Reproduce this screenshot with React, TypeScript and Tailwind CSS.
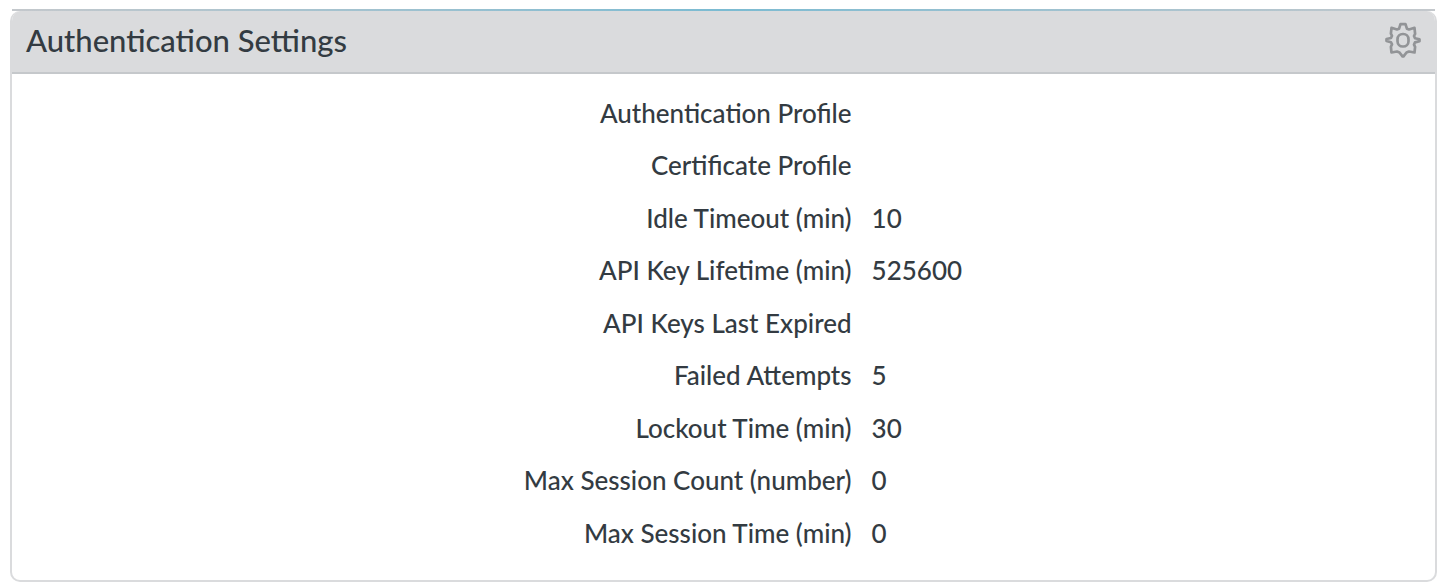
import React from "react";

const rows = [
  { label: "Authentication Profile", value: "" },
  { label: "Certificate Profile", value: "" },
  { label: "Idle Timeout (min)", value: "10" },
  { label: "API Key Lifetime (min)", value: "525600" },
  { label: "API Keys Last Expired", value: "" },
  { label: "Failed Attempts", value: "5" },
  { label: "Lockout Time (min)", value: "30" },
  { label: "Max Session Count (number)", value: "0" },
  { label: "Max Session Time (min)", value: "0" },
];

function GearIcon() {
  return (
    <svg viewBox="0 0 36 36" className="size-9" fill="none" strokeLinejoin="round" aria-hidden="true">
      <g stroke="#929497" strokeWidth="2.7">
        <path d="M15.5 2.200h5l1.500 4.600 2 .7 5.500-1.700.6 6-1.100 2.200 1 2.200 4.500 1v2l-4.500 1.200-1 2.200 1.100 2.200-.6 5.700-5.500-1-2.500 1-3 3.900h-1l-3-3.900-2.500-1-5.500 1-.6-5.700L7 22.400l-1-2.200L1.500 19v-2L6 16l1-2.200-1.100-2.200.6-5.800L12 7.500l2-.7z" />
        <rect x="12.500" y="12" width="11" height="12.500" rx="5.300" />
      </g>
    </svg>
  );
}

export default function App() {
  return (
    <main className="pt-[9px] pr-[5px] pb-[6px] pl-[10px] font-['Lato',sans-serif] font-medium text-[#333b42]">
      <div className="mx-[2px] h-[2px] bg-linear-to-r from-[#c4c8cc] via-[#7bbbd2] to-[#c4c8cc]" />
      <section className="overflow-hidden rounded-[10px] border-x-2 border-b-2 border-[#dadbdd] bg-white">
        <header className="flex h-[63px] items-center justify-between border-b-2 border-[#c5c8cb] bg-[#dadbdd] px-[14px] pb-1">
          <h1 className="text-[31px] leading-9 font-medium">Authentication Settings</h1>
          <button type="button" aria-label="Edit authentication settings">
            <GearIcon />
          </button>
        </header>
        <table className="mt-3 mb-[21px] w-full table-fixed text-[26px] leading-[52px]">
          <tbody>
            {rows.map((row) => (
              <tr key={row.label} className="odd:h-[53px] even:h-[52px]">
                <th scope="row" className="w-[59%] p-0 text-right font-medium">{row.label}</th>
                <td className="py-0 pl-5">{row.value}</td>
              </tr>
            ))}
          </tbody>
        </table>
      </section>
    </main>
  );
}
